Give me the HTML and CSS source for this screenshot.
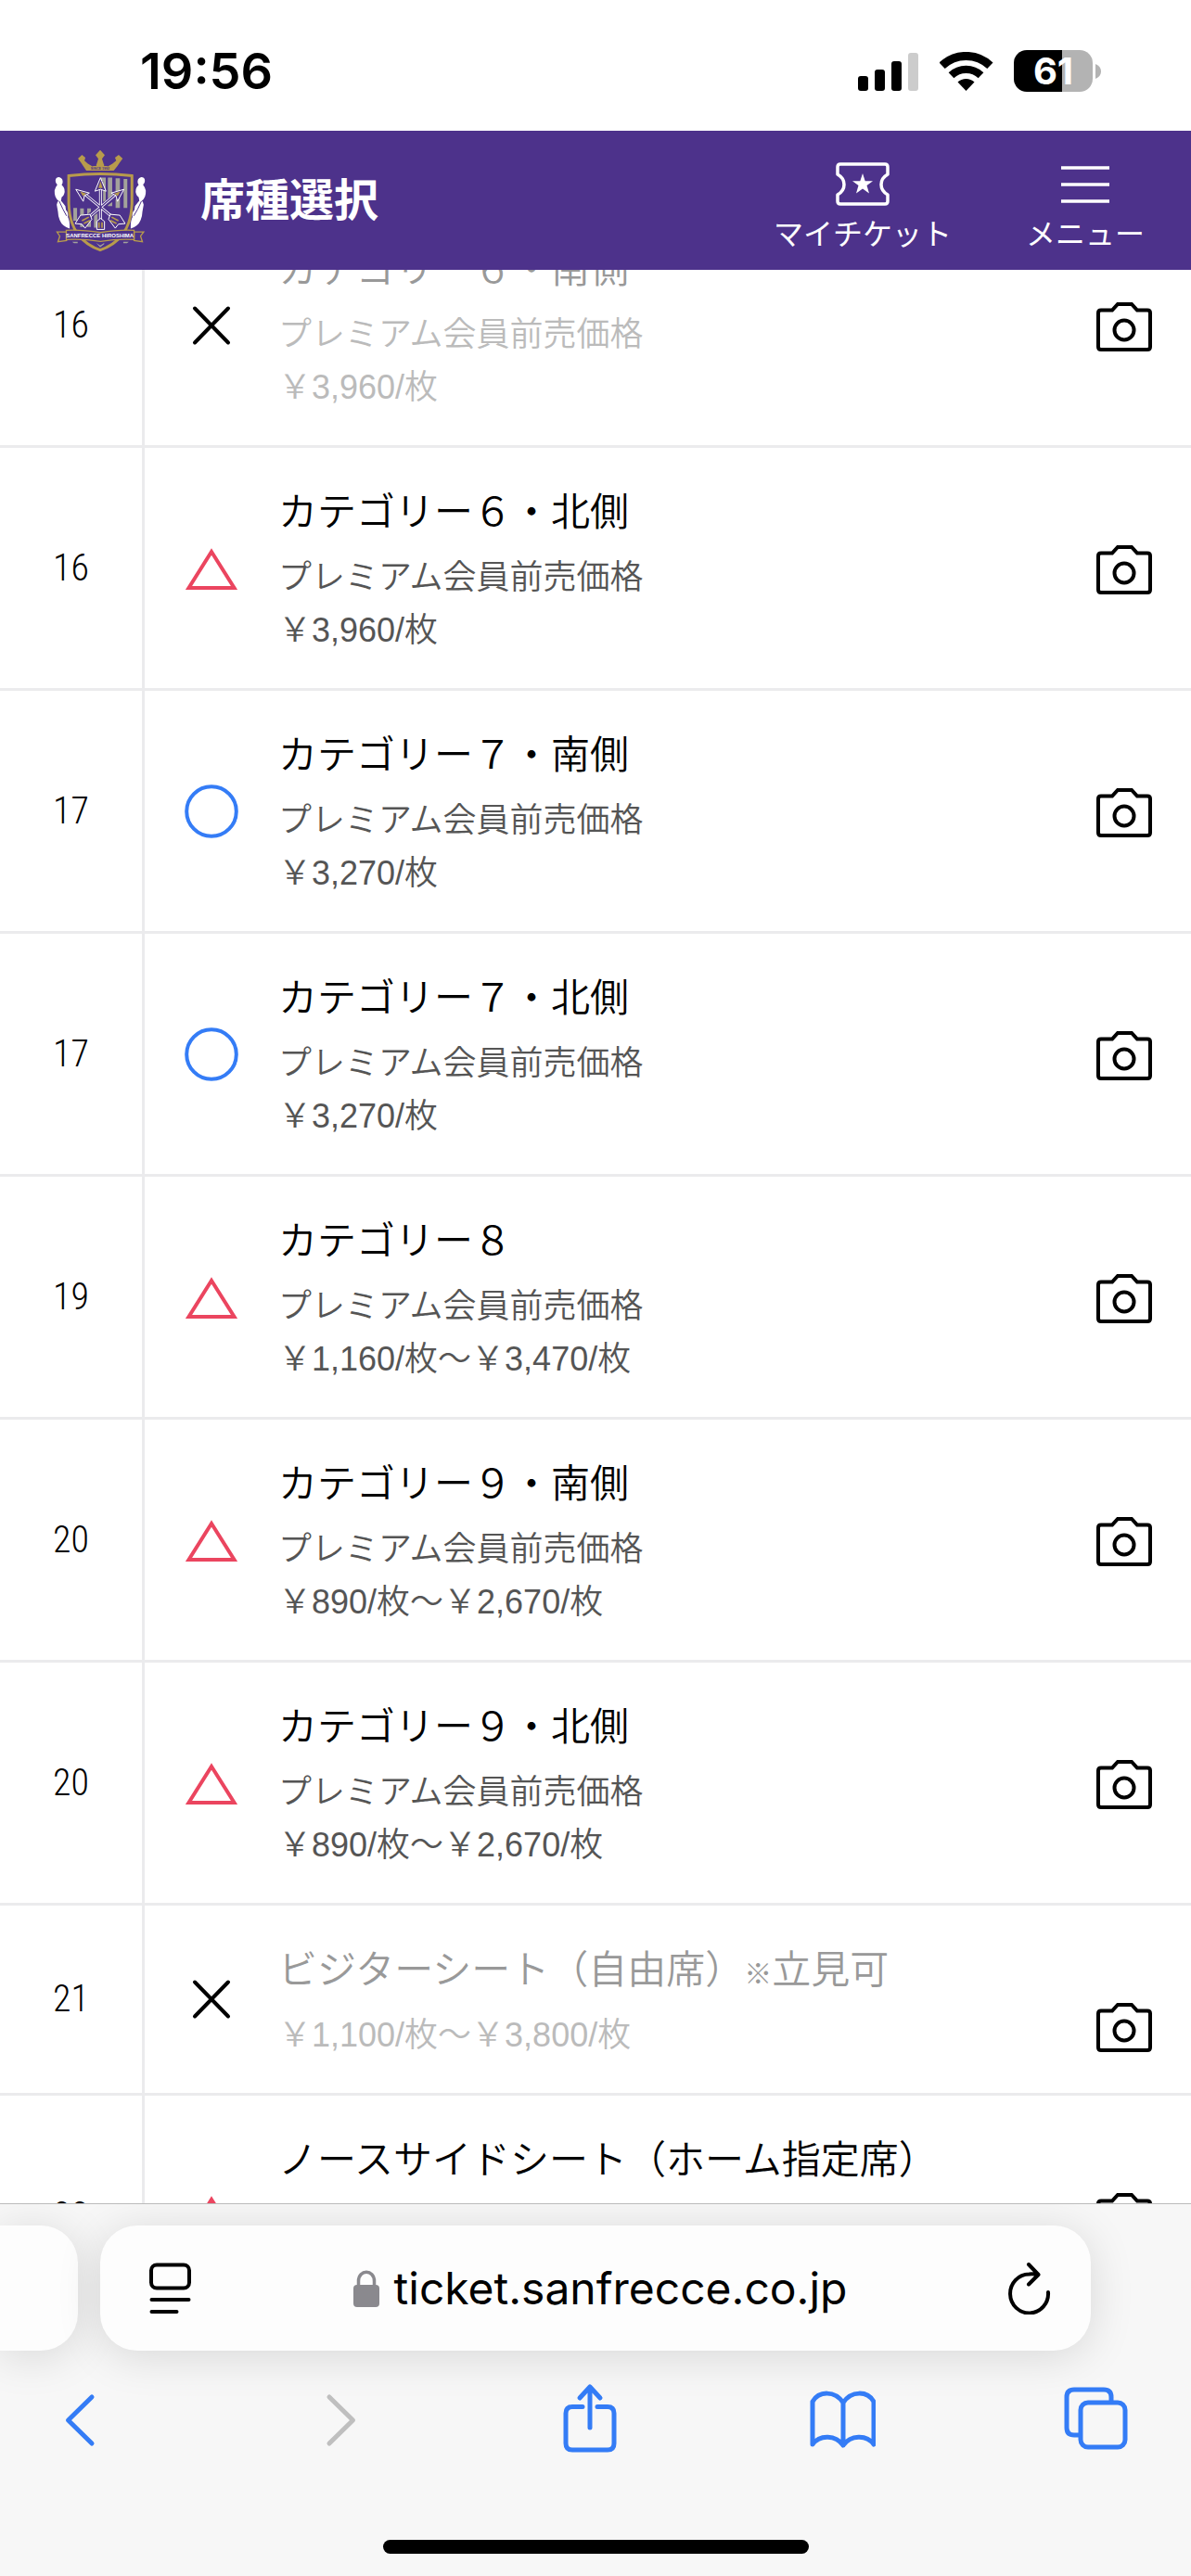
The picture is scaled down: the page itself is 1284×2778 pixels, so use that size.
FILE: index.html
```html
<!DOCTYPE html>
<html lang="ja">
<head>
<meta charset="utf-8">
<meta name="viewport" content="width=device-width, initial-scale=1">
<title>席種選択</title>
<link rel="stylesheet" href="styles.css">
</head>
<body>
<svg class="defs" aria-hidden="true">
  <symbol id="camera" viewBox="0 0 60 60"><path d="M5 11.500H17L23 5H38L44 11.500H55Q58 11.500 58 14.500V51Q58 54 55 54H5Q2 54 2 51V14.500Q2 11.500 5 11.500Z"/><circle cx="30" cy="33" r="10.500"/></symbol>
  <symbol id="none" viewBox="0 0 58 58"><path d="M11 10.500L47 47.500M47 10.500L11 47.500"/></symbol>
  <symbol id="few" viewBox="0 0 58 58"><path d="M29 11L53.500 50H4.500Z"/></symbol>
  <symbol id="many" viewBox="0 0 58 58"><circle cx="29" cy="29" r="26.800"/></symbol>
</svg>
<div class="screen">
  <div class="status">
    <time class="clock">19:56</time>
    <div class="status-icons">
      <svg width="66" height="42" viewBox="0 0 66 42"><rect y="26" width="11" height="16" rx="3"/><rect x="18" y="19" width="11" height="23" rx="3"/><rect x="36" y="10" width="11" height="32" rx="3"/><rect x="54" y="1" width="11" height="41" rx="3" fill="#ccc"/></svg>
      <svg width="58" height="42" viewBox="0 0 58 42"><g fill="none" stroke="#000"><path stroke-width="9" d="M2.600 14.800A37.500 37.500 0 0 1 54.400 14.800"/><path stroke-width="8.300" d="M12.500 25.200A23.200 23.200 0 0 1 44.500 25.200"/></g><path d="M28.500 42L19.500 32.600A13 13 0 0 1 37.500 32.600Z"/></svg>
      <div class="battery"><span class="battery-level">61</span><svg width="6" height="16" viewBox="0 0 6 16"><path fill="#b3b3b3" d="M0 0C8 3 8 13 0 16Z"/></svg></div>
    </div>
  </div>

  <header class="site-header">
    <svg class="crest" viewBox="50 35 306 340" role="img" aria-label="Sanfrecce Hiroshima">
      <path fill="#b89b4c" d="M203 40L218 57L209 69L215 88L228 94L243 85L255 75L251 65L263 56L276 68L267 80L259 92L247 107H158L148 92L140 80L131 68L144 56L155 65L152 75L163 85L178 94L191 88L197 69L188 57Z"/>
      <path fill="#4d328b" d="M178 92L187 80L191 92ZM215 92L220 80L229 92Z"/>
      <text x="203" y="104" font-size="11" font-weight="700" text-anchor="middle" fill="#4d328b">SINCE 1992</text>
      <path fill="none" stroke="#b89b4c" stroke-width="9" d="M101 124Q203 112 306 124V215Q303 330 203 365Q104 330 101 215Z"/>
      <g fill="#a3a29b"><path d="M206 130h15v78h-15zM228 130h14v92h-14zM253 132h14v96h-14zM279 134h12v94h-12zM116 228h12v42h-12zM138 230h12v60h-12zM161 230h12v60h-12zM183 232h12v60h-12z"/></g>
      <g fill="none" stroke="#4d328b" stroke-width="17"><path d="M204 140V290M140 180L262 270M266 180L148 270"/></g>
      <g fill="none" stroke="#fff" stroke-width="9"><path d="M204 165V275M155 185L255 268M252 185L155 268"/></g>
      <g fill="none" stroke="#4d328b" stroke-width="4"><path d="M204 165V275M155 185L255 268M252 185L155 268"/></g>
      <g fill="#4d328b" stroke="#fff" stroke-width="3"><path d="M204 130L222 174L204 168L186 174ZM124 168L168 180L152 188L148 207ZM280 168L239 180L254 188L259 207Z"/><path d="M192 272L204 262L217 272V298H192ZM139 252L170 249L176 265L154 294L144 281L122 279ZM267 252L236 249L230 265L252 294L262 281L284 279Z"/></g>
      <g fill="#b89b4c"><path d="M204 142L211 164H197ZM138 175L158 182L147 190ZM268 175L248 182L260 190Z"/></g>
      <g stroke="#b89b4c" stroke-width="5"><path d="M199 275v18M209 275v18M144 270l22-12M150 279l20-10M262 270l-22-12M256 279l-20-10"/></g>
      <g id="plume" fill="#fff"><path d="M58 140Q58 128 70 128Q84 132 81 148L78 153Q92 167 86 183Q84 190 78 194L76 205Q84 214 90 222L92 235Q101 244 98 258Q105 270 104 295Q80 288 72 268Q66 252 66 240L62 218Q64 208 68 205Q54 195 55 172Q58 160 64 153Q58 148 58 140Z"/></g>
      <use href="#plume" transform="translate(406 0) scale(-1 1)"/>
      <path fill="none" stroke="#4d328b" stroke-width="3" d="M70 206Q82 234 94 254M337 206Q325 234 312 254"/>
      <path fill="#4d328b" stroke="#b89b4c" stroke-width="4" d="M94 306H63L72 320L66 338L94 334ZM313 306H344L334 320L340 338L313 334Z"/>
      <path fill="#4d328b" stroke="#b89b4c" stroke-width="4" d="M93 301Q140 298 204 308Q266 298 313 301V331Q260 328 204 337Q146 328 93 331Z"/>
      <g fill="#a3a29b"><path d="M112 338h18v5h-12zM278 338h18l-6 5h-12zM190 342l13 8l13-8v4l-13 10z"/></g>
      <text x="202" y="325" font-size="18" font-weight="700" text-anchor="middle" fill="#fff">SANFRECCE HIROSHIMA</text>
    </svg>
    <h1 class="page-title">席種選択</h1>
    <nav class="header-nav">
      <a class="nav-item" href="#ticket">
        <svg class="nav-icon" viewBox="0 0 60 60"><path fill="none" stroke="#fff" stroke-width="3.500" stroke-linejoin="round" d="M6 9H54Q57 9 57 12V20Q50 24 50 31T57 42V49Q57 52 54 52H6Q3 52 3 49V42Q10 38 10 31T3 20V12Q3 9 6 9Z"/><path fill="#fff" d="M30 19l2.700 8.200H41l-6.500 4.800 2.500 8.500L30 35.500l-7 5 2.500-8.500L19 27.200h8.300Z"/></svg>
        <span>マイチケット</span>
      </a>
      <button class="nav-item" type="button">
        <svg class="nav-icon" viewBox="0 0 60 60"><path stroke="#fff" stroke-width="3.500" d="M4 13H56M4 31H56M4 49H56"/></svg>
        <span>メニュー</span>
      </button>
    </nav>
  </header>

  <main class="viewport">
    <table class="seats">
      <tbody>
        <tr class="sold-out"><th scope="row">16</th><td class="stock"><svg class="mark mark-none" role="img" aria-label="売切"><use href="#none"/></svg></td><td class="seat"><h2>カテゴリー６・南側</h2><p>プレミアム会員前売価格</p><p>￥3,960/枚</p></td><td class="view"><button type="button" aria-label="写真"><svg><use href="#camera"/></svg></button></td></tr>
        <tr><th scope="row">16</th><td class="stock"><svg class="mark mark-few" role="img" aria-label="残りわずか"><use href="#few"/></svg></td><td class="seat"><h2>カテゴリー６・北側</h2><p>プレミアム会員前売価格</p><p>￥3,960/枚</p></td><td class="view"><button type="button" aria-label="写真"><svg><use href="#camera"/></svg></button></td></tr>
        <tr><th scope="row">17</th><td class="stock"><svg class="mark mark-many" role="img" aria-label="空席あり"><use href="#many"/></svg></td><td class="seat"><h2>カテゴリー７・南側</h2><p>プレミアム会員前売価格</p><p>￥3,270/枚</p></td><td class="view"><button type="button" aria-label="写真"><svg><use href="#camera"/></svg></button></td></tr>
        <tr><th scope="row">17</th><td class="stock"><svg class="mark mark-many" role="img" aria-label="空席あり"><use href="#many"/></svg></td><td class="seat"><h2>カテゴリー７・北側</h2><p>プレミアム会員前売価格</p><p>￥3,270/枚</p></td><td class="view"><button type="button" aria-label="写真"><svg><use href="#camera"/></svg></button></td></tr>
        <tr><th scope="row">19</th><td class="stock"><svg class="mark mark-few" role="img" aria-label="残りわずか"><use href="#few"/></svg></td><td class="seat"><h2>カテゴリー８</h2><p>プレミアム会員前売価格</p><p>￥1,160/枚〜￥3,470/枚</p></td><td class="view"><button type="button" aria-label="写真"><svg><use href="#camera"/></svg></button></td></tr>
        <tr><th scope="row">20</th><td class="stock"><svg class="mark mark-few" role="img" aria-label="残りわずか"><use href="#few"/></svg></td><td class="seat"><h2>カテゴリー９・南側</h2><p>プレミアム会員前売価格</p><p>￥890/枚〜￥2,670/枚</p></td><td class="view"><button type="button" aria-label="写真"><svg><use href="#camera"/></svg></button></td></tr>
        <tr><th scope="row">20</th><td class="stock"><svg class="mark mark-few" role="img" aria-label="残りわずか"><use href="#few"/></svg></td><td class="seat"><h2>カテゴリー９・北側</h2><p>プレミアム会員前売価格</p><p>￥890/枚〜￥2,670/枚</p></td><td class="view"><button type="button" aria-label="写真"><svg><use href="#camera"/></svg></button></td></tr>
        <tr class="sold-out"><th scope="row">21</th><td class="stock"><svg class="mark mark-none" role="img" aria-label="売切"><use href="#none"/></svg></td><td class="seat"><h2>ビジターシート（自由席）<span class="note-mark">※</span>立見可</h2><p>￥1,100/枚〜￥3,800/枚</p></td><td class="view"><button type="button" aria-label="写真"><svg><use href="#camera"/></svg></button></td></tr>
        <tr class="tall"><th scope="row">22</th><td class="stock"><svg class="mark mark-few" role="img" aria-label="残りわずか"><use href="#few"/></svg></td><td class="seat"><h2>ノースサイドシート（ホーム指定席）</h2></td><td class="view"><button type="button" aria-label="写真"><svg><use href="#camera"/></svg></button></td></tr>
      </tbody>
    </table>
  </main>

  <footer class="browser">
    <div class="tabs">
      <div class="tab tab-prev"></div>
      <div class="tab tab-current">
        <button type="button" aria-label="ページメニュー"><svg width="46" height="56" viewBox="0 0 46 56" fill="none" stroke="#000" stroke-width="4" stroke-linecap="round"><rect x="2" y="2.500" width="41" height="25" rx="6"/><path d="M2.500 40H42.500M2.500 53H29.500"/></svg></button>
        <button class="address" type="button"><svg width="28" height="40" viewBox="0 0 28 40"><path fill="none" stroke="#8a898e" stroke-width="3.500" d="M5.500 18V12C5.500 -1 22.500 -1 22.500 12V18"/><rect y="16" width="28" height="24" rx="4" fill="#8a898e"/></svg><span>ticket.sanfrecce.co.jp</span></button>
        <button type="button" aria-label="再読み込み"><svg width="46" height="56" viewBox="0 0 46 56" fill="none" stroke="#000" stroke-width="4" stroke-linecap="round" stroke-linejoin="round"><path d="M43 32A20.500 21 0 1 1 22.500 12.500Q27 12 31.500 13M22 2L32.500 13L22 23.500"/></svg></button>
      </div>
    </div>
    <div class="toolbar">
      <button type="button" aria-label="戻る"><svg class="tool" viewBox="0 0 72 80"><path d="M49 17L23.500 42L49 67"/></svg></button>
      <button type="button" aria-label="進む" disabled><svg class="tool" viewBox="0 0 72 80"><path d="M31 17L56.500 42L31 67"/></svg></button>
      <button type="button" aria-label="共有"><svg class="tool" viewBox="0 0 72 80"><path d="M30 27.500H19Q12 27.500 12 34.500V67Q12 74 19 74H57Q64 74 64 67V34.500Q64 27.500 57 27.500H46M38 50V6M27 18L38 6L49 18"/></svg></button>
      <button type="button" aria-label="ブックマーク"><svg class="tool" viewBox="0 0 72 80"><path d="M37 23C28 10 11 10 4 22V68C12 57 29 58 37 69C45 58 62 57 70 68V22C63 10 46 10 37 23V69"/></svg></button>
      <button type="button" aria-label="タブ"><svg class="tool" viewBox="0 0 72 80"><path d="M17 58H12Q4 58 4 50V17Q4 9 12 9H44Q52 9 52 17V22"/><rect x="19" y="23" width="48" height="48" rx="8"/></svg></button>
    </div>
    <div class="home-indicator"></div>
  </footer>
</div>
</body>
</html>
```
FILE: styles.css
```css
* { box-sizing: border-box; }

body {
  margin: 0;
  background: #fff;
  color: #000;
  font-family: "Liberation Sans", "Noto Sans CJK JP", sans-serif;
}

h1, h2, p { margin: 0; font-weight: 400; }

button {
  padding: 0;
  border: 0;
  background: none;
  color: inherit;
  font: inherit;
}

svg { display: block; flex: none; }

.defs { position: absolute; width: 0; height: 0; }

.screen {
  display: flex;
  flex-direction: column;
  height: 100vh;
  overflow: hidden;
}

/* Status bar */
.status {
  display: flex;
  flex: none;
  align-items: center;
  justify-content: space-between;
  height: 141px;
  padding: 12px 97px 0 151px;
}

.clock { font: 600 54px/60px Inter, sans-serif; }

.status-icons { display: flex; align-items: center; gap: 22px; }

.battery { display: flex; align-items: center; gap: 3px; }

.battery-level {
  width: 85px;
  height: 45px;
  border-radius: 14px;
  background: linear-gradient(90deg, #000 61%, #b3b3b3 61%);
  color: #fff;
  font: 700 40px/45px Inter, sans-serif;
  text-align: center;
}

/* Site header */
.site-header {
  display: flex;
  flex: none;
  align-items: center;
  height: 150px;
  padding: 0 50px 0 57px;
  background: #4d328b;
  color: #fff;
}

.crest { width: 102px; height: 113px; }

.page-title {
  margin-left: 57px;
  padding-bottom: 8px;
  font: 700 48px/60px "Noto Sans CJK JP", sans-serif;
}

.header-nav { display: flex; gap: 80px; margin-left: auto; padding-top: 8px; }

.nav-item {
  display: flex;
  flex-direction: column;
  align-items: center;
  color: #fff;
  font: 400 32px/44px "Noto Sans CJK JP", sans-serif;
  text-decoration: none;
}

.nav-icon { width: 60px; height: 60px; }

/* Seat list, scrolled part of the way into its first row */
.viewport { flex: 1; min-height: 0; overflow: hidden; }

.seats {
  width: 100%;
  margin-top: -70px;
  border-collapse: separate;
  border-spacing: 0;
}

.seats th, .seats td { padding: 0; border-bottom: 3px solid #ebebed; }

.seats th {
  width: 156px;
  border-right: 3px solid #ebebed;
  font: 300 40px/48px "Liberation Sans Narrow", "Roboto Condensed", "Liberation Sans", sans-serif;
  text-align: center;
}

.seats .stock { width: 144px; }

.mark { width: 58px; height: 58px; margin: 0 auto; fill: none; stroke-width: 4; }
.mark-none { stroke: #000; stroke-linecap: round; }
.mark-few { stroke: #eb455f; }
.mark-many { stroke: #347cf6; }

.seats .seat { padding: 38px 0 34px; vertical-align: top; }

.seat h2 { margin-bottom: 10px; font-size: 42px; line-height: 63px; }
.seat p { color: #555; font-size: 36px; line-height: 57px; }
.seat h2, .seat p { font-weight: 350; }

.note-mark { font-size: 30px; line-height: 1; }

.sold-out h2 { color: #999; }
.sold-out p { color: #bbb; }

.tall { height: 262px; }

.seats .view { width: 102px; padding-top: 102px; vertical-align: top; }
.view svg { width: 60px; height: 60px; fill: none; stroke: #000; stroke-width: 4; }

/* Browser chrome */
.browser {
  flex: none;
  overflow: hidden;
  border-top: 1px solid #bbb;
  background: #f7f7f7;
}

.tabs { display: flex; gap: 24px; padding: 23px 108px 0 0; }

.tab {
  height: 135px;
  background: #fdfdfd;
  box-shadow: 0 6px 48px rgba(0, 0, 0, .13);
}

.tab-prev { width: 84px; border-radius: 0 40px 40px 0; }

.tab-current {
  display: flex;
  flex: 1;
  align-items: center;
  justify-content: space-between;
  padding: 0 43px 0 53px;
  border-radius: 40px;
}

.address {
  display: flex;
  align-items: center;
  gap: 16px;
  font: 400 48px/60px Inter, sans-serif;
}

.toolbar {
  display: flex;
  justify-content: space-between;
  padding: 33px 66px 0 50px;
}

.tool {
  width: 72px;
  height: 80px;
  fill: none;
  stroke: #347cf6;
  stroke-width: 5;
  stroke-linecap: round;
  stroke-linejoin: round;
}

button:disabled .tool { stroke: #bfbfbf; }

.home-indicator {
  width: 459px;
  height: 15px;
  margin: 91px auto 24px;
  border-radius: 8px;
  background: #000;
}
```
